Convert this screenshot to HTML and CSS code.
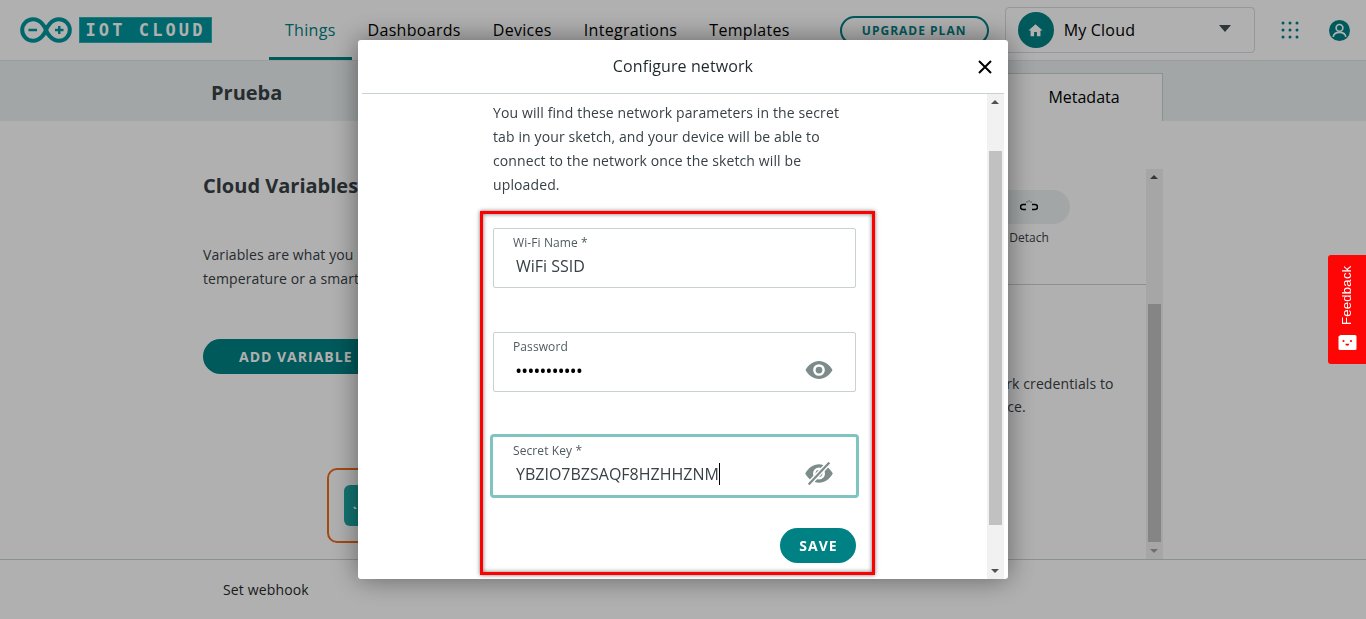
FILE: index.html
```html
<!DOCTYPE html>
<html lang="en">
<head>
<meta charset="utf-8">
<title>Configure network</title>
<link rel="stylesheet" href="styles.css">
</head>
<body>
<div class="page">
  <header class="topbar">
    <div class="brand">
      <svg class="brand-mark" viewBox="0 0 52 26" width="52" height="26" aria-hidden="true">
        <path d="M13 2.200C7 2.200 2.200 7 2.200 13S7 23.800 13 23.800c8 0 12-8 13-10.800 1-2.800 5-10.800 13-10.800 6 0 10.800 4.800 10.800 10.800S45 23.800 39 23.800c-8 0-12-8-13-10.800-1-2.800-5-10.800-13-10.800z" fill="none" stroke="#00979d" stroke-width="4"/>
        <path d="M8.500 13h8.500M35 13h8.500M39.250 9v8" fill="none" stroke="#00979d" stroke-width="2.400"/>
      </svg>
      <span class="brand-name">IOT CLOUD</span>
    </div>
    <nav class="tabs">
      <a class="tab tab-active">Things</a>
      <a class="tab">Dashboards</a>
      <a class="tab">Devices</a>
      <a class="tab">Integrations</a>
      <a class="tab">Templates</a>
    </nav>
    <button class="upgrade">UPGRADE PLAN</button>
    <div class="space">
      <span class="space-avatar">
        <svg viewBox="0 0 24 24" width="17" height="17" aria-hidden="true"><path fill="#fff" d="M10 20v-6h4v6h5v-8h3L12 3 2 12h3v8z"/></svg>
      </span>
      <span class="space-name">My Cloud</span>
      <span class="caret-down"></span>
    </div>
    <svg class="apps" viewBox="0 0 18 18" width="18" height="18" aria-hidden="true">
      <g fill="#008184">
        <circle cx="2" cy="2" r="1.500"/><circle cx="9" cy="2" r="1.500"/><circle cx="16" cy="2" r="1.500"/>
        <circle cx="2" cy="9" r="1.500"/><circle cx="9" cy="9" r="1.500"/><circle cx="16" cy="9" r="1.500"/>
        <circle cx="2" cy="16" r="1.500"/><circle cx="9" cy="16" r="1.500"/><circle cx="16" cy="16" r="1.500"/>
      </g>
    </svg>
    <svg class="account" viewBox="0 0 20 20" width="21" height="21" aria-hidden="true">
      <circle cx="10" cy="10" r="10" fill="#008184"/>
      <circle cx="10" cy="7.500" r="3.200" fill="none" stroke="#fff" stroke-width="1.600"/>
      <path d="M4 16c.5-3 3-4.200 6-4.200s5.500 1.200 6 4.200" fill="none" stroke="#fff" stroke-width="1.600"/>
    </svg>
  </header>

  <section class="subbar">
    <div class="container subbar-row">
      <h1 class="thing-name">Prueba</h1>
      <div class="subtab">Metadata</div>
    </div>
  </section>

  <main class="main">
    <div class="container columns">
      <div class="col-left">
        <h2 class="vars-title">Cloud Variables</h2>
        <p class="vars-text">Variables are what you need<br>temperature or a smart device</p>
        <button class="add-var">ADD VARIABLE</button>
        <div class="hint">
          <span class="hint-icon">
            <svg viewBox="0 0 24 24" width="24" height="24" aria-hidden="true"><path d="M8 22l5 6 9-14" fill="none" stroke="#fff" stroke-width="2"/></svg>
          </span>
        </div>
      </div>
      <div class="col-right">
        <div class="device-actions">
          <div class="action">
            <span class="action-pill">
              <svg viewBox="0 0 18 14" width="18" height="14" aria-hidden="true">
                <path d="M6 5H3a2 2 0 0 0 0 5h3M12 5h3a2 2 0 0 1 0 5h-3" fill="none" stroke="#000" stroke-width="1.500" transform="translate(0 -.5)"/>
                <path d="M7 1.500v1M9 0.500v1M11 1.500v1" stroke="#333" stroke-width="1"/>
              </svg>
            </span>
            <span class="action-label">Detach</span>
          </div>
        </div>
        <div class="network">
          <p class="network-text">Enter your network credentials to<br>connecting a device.</p>
        </div>
      </div>
      <div class="page-scroll">
        <span class="arrow-up arrow-dark"></span>
        <span class="page-thumb"></span>
        <span class="arrow-down arrow-mid"></span>
      </div>
    </div>
  </main>

  <footer class="footer">
    <div class="container"><a class="webhook">Set webhook</a></div>
  </footer>
</div>

<div class="overlay">
  <div class="modal">
    <div class="modal-head">
      <h3 class="modal-title">Configure network</h3>
      <svg class="modal-close" viewBox="0 0 14 14" width="14" height="14" aria-hidden="true"><path d="M1 1l12 12M13 1L1 13" stroke="#000" stroke-width="2"/></svg>
    </div>
    <div class="modal-body">
      <div class="modal-content">
        <p class="modal-text">You will find these network parameters in the secret tab in your sketch, and your device will be able to connect to the network once the sketch will be uploaded.</p>
        <div class="field">
          <span class="field-label">Wi-Fi Name *</span>
          <span class="field-value">WiFi SSID</span>
        </div>
        <div class="field field-gap">
          <span class="field-label">Password</span>
          <span class="field-value field-dots">•••••••••••</span>
          <svg class="field-eye" viewBox="0 0 24 16" width="28" height="18" aria-hidden="true"><path fill="#7e8b8b" d="M12 0C7 0 2.700 3.100 0 8c2.700 4.900 7 8 12 8s9.300-3.100 12-8c-2.700-4.900-7-8-12-8zm0 13.200A5.200 5.200 0 1 1 12 2.800a5.200 5.200 0 0 1 0 10.400zM12 5a3 3 0 1 0 0 6 3 3 0 0 0 0-6z"/></svg>
        </div>
        <div class="field field-focus">
          <span class="field-label">Secret Key *</span>
          <span class="field-value"><span class="typed">YBZIO7BZSAQF8HZHHZNM</span></span>
          <svg class="field-eye" viewBox="0 0 24 20" width="28" height="23" aria-hidden="true">
            <path fill="#7e8b8b" d="M12 2C7 2 2.700 5.100 0 10c2.700 4.900 7 8 12 8s9.300-3.100 12-8c-2.700-4.900-7-8-12-8zm0 13.200A5.200 5.200 0 1 1 12 4.800a5.200 5.200 0 0 1 0 10.400zM12 7a3 3 0 1 0 0 6 3 3 0 0 0 0-6z"/>
            <path d="M21 .5L3 19.500" stroke="#fff" stroke-width="4.500"/>
            <path d="M21 .5L3 19.500" stroke="#7e8b8b" stroke-width="2"/>
          </svg>
        </div>
        <div class="save-row"><button class="save">SAVE</button></div>
      </div>
      <div class="modal-scroll">
        <span class="arrow-up arrow-dark"></span>
        <span class="modal-thumb"></span>
        <span class="arrow-down arrow-dark"></span>
      </div>
    </div>
  </div>
  <div class="annotation"></div>
  <div class="feedback">
    <span class="feedback-text">Feedback</span>
    <svg class="feedback-face" viewBox="0 0 18 15" width="19" height="15" aria-hidden="true">
      <path fill="#fff" d="M0 1.500L2 0h14.500A1.500 1.500 0 0 1 18 1.500v12a1.500 1.500 0 0 1-1.500 1.500h-15A1.500 1.500 0 0 1 0 13.500z"/>
      <circle cx="5" cy="6" r="1.100" fill="#fe0606"/><circle cx="12.500" cy="6" r="1.100" fill="#fe0606"/>
      <path d="M6.800 8.800h4a2 2 0 0 1-4 0z" fill="#fe0606"/>
    </svg>
  </div>
</div>
</body>
</html>
```

FILE: styles.css
```css
* { box-sizing: border-box; }
html, body { margin: 0; height: 100%; overflow: hidden; }
body { font-family: "Open Sans", sans-serif; color: #1f2a2b; background: #fff; }
h1, h2, h3, p { margin: 0; }
button { font-family: inherit; cursor: pointer; }

.page { height: 100vh; display: flex; flex-direction: column; }
.container { width: 960px; margin: 0 auto; }

/* top bar */
.topbar { height: 61px; flex: none; display: flex; align-items: flex-start; padding-left: 20px; border-bottom: 1px solid #dfe5e5; }
.brand { display: flex; align-items: center; gap: 7px; height: 26px; margin-top: 17px; }
.brand-name { width: 133px; height: 26px; background: #00979d; color: #fff; font-family: "DejaVu Sans Mono", monospace; font-weight: 700; font-size: 17px; line-height: 25px; letter-spacing: 3.100px; text-align: center; border: 1px solid #2fb0b4; white-space: nowrap; }
.tabs { display: flex; gap: 0; margin-left: 57px; height: 60px; }
.tab { height: 60px; padding: 18px 16px 0; font-size: 16px; line-height: 24px; letter-spacing: .300px; color: #000; border-bottom: 3px solid transparent; }
.tab-active { color: #008184; border-bottom-color: #008184; }
.upgrade { margin-left: 34px; margin-top: 16px; width: 149px; height: 29px; border: 2px solid #008184; border-radius: 15px; background: transparent; color: #008184; font-size: 12px; font-weight: 700; letter-spacing: 1px; padding: 0; }
.space { margin-left: 16px; margin-top: 7px; width: 250px; height: 46px; border: 1px solid #d6dcdc; border-radius: 4px; display: flex; align-items: center; padding-left: 12px; }
.space-avatar { width: 36px; height: 36px; border-radius: 50%; background: #008184; display: flex; align-items: center; justify-content: center; }
.space-name { margin-left: 10px; font-size: 16px; letter-spacing: .200px; color: #000; flex: 1; }
.caret-down { width: 0; height: 0; margin-right: 23px; margin-top: -4px; border-left: 6px solid transparent; border-right: 6px solid transparent; border-top: 7px solid #434f50; }
.apps { margin-left: 26px; margin-top: 21px; }
.account { margin-left: 30px; margin-top: 20px; }

/* sub bar */
.subbar { height: 60px; flex: none; background: #ecf1f1; }
.subbar-row { height: 60px; display: flex; justify-content: space-between; align-items: flex-end; }
.thing-name { font-size: 20px; line-height: 27px; font-weight: 700; color: #374146; margin: 0 0 15px 8px; }
.subtab { width: 158px; height: 48px; border: 1px solid #c9d2d2; border-bottom: 0; background: #fff; font-size: 16px; line-height: 47px; text-align: center; color: #000; }

/* main */
.main { flex: 1; min-height: 0; }
.columns { height: 100%; display: flex; align-items: flex-start; padding-top: 48px; }
.col-left { width: 520px; flex: none; }
.vars-title { font-size: 20px; line-height: 24px; font-weight: 700; color: #374146; margin-top: 5px; }
.vars-text { margin-top: 45px; font-size: 14px; line-height: 24px; letter-spacing: .100px; color: #374146; white-space: nowrap; }
.add-var { display: block; margin-top: 48px; width: 240px; height: 35px; border: 0; border-radius: 18px; background: #008184; color: #fff; font-size: 14px; font-weight: 700; letter-spacing: 1px; text-align: left; padding: 0 0 0 36px; }
.hint { margin: 94px 0 0 124px; width: 300px; height: 75px; border: 2px solid #f06a1c; border-radius: 10px; padding: 15px; }
.hint-icon { display: block; width: 60px; height: 41px; border-radius: 6px; background: #1ba8a5; overflow: hidden; padding-left: 2px; }

.col-right { flex: 1; min-width: 0; height: 390px; }
.device-actions { height: 116px; border-bottom: 1px solid #c9d2d2; display: flex; justify-content: flex-end; padding: 21px 76px 0 0; }
.action { display: flex; flex-direction: column; align-items: center; width: 82px; }
.action-pill { width: 82px; height: 34px; border-radius: 17px; background: #ecf1f1; display: flex; align-items: center; justify-content: center; }
.action-label { margin-top: 5px; font-size: 12px; line-height: 18px; color: #374146; }
.network { padding: 87px 0 0 169px; }
.network-text { font-size: 14px; line-height: 23px; letter-spacing: .100px; color: #374146; white-space: nowrap; }

.page-scroll { width: 17px; height: 390px; flex: none; margin-top: 0; background: #f1f1f1; display: flex; flex-direction: column; align-items: center; position: relative; }
.page-thumb { position: absolute; left: 2px; top: 135px; width: 13px; height: 238px; background: #c1c1c1; }
.arrow-up, .arrow-down { position: absolute; left: 4px; width: 0; height: 0; border-left: 4px solid transparent; border-right: 4px solid transparent; }
.arrow-up { top: 6px; border-bottom: 4px solid #505050; }
.arrow-down { bottom: 6px; border-top: 4px solid #505050; }
.arrow-mid.arrow-down { border-top-color: #a0a0a0; }

/* footer */
.footer { height: 60px; flex: none; border-top: 1px solid #c9d2d2; }
.webhook { display: block; margin: 20px 0 0 20px; font-size: 14px; line-height: 20px; letter-spacing: .150px; color: #1f2a2b; }

/* overlay + modal */
.overlay { position: fixed; inset: 0; background: rgba(0, 0, 0, .31); }
.modal { position: absolute; left: 358px; top: 40px; width: 650px; height: 539px; background: #fff; border-radius: 3px; box-shadow: 0 0 28px rgba(0, 0, 0, .45); display: flex; flex-direction: column; padding: 0 4px; }
.modal-head { height: 54px; flex: none; display: flex; align-items: center; justify-content: center; border-bottom: 1px solid #c9d2d2; position: relative; }
.modal-title { font-size: 16px; font-weight: 400; line-height: 24px; letter-spacing: .100px; color: #1f2a2b; margin-top: -2px; }
.modal-close { position: absolute; right: 12px; top: 20px; }
.modal-body { flex: 1; min-height: 0; display: flex; }
.modal-content { flex: 1; min-width: 0; padding: 7px 0 0 131px; overflow: hidden; }
.modal-text { width: 363px; font-size: 14px; line-height: 24px; letter-spacing: .120px; color: #374146; }

.field { position: relative; display: block; width: 363px; height: 60px; margin-top: 31px; border: 1px solid #c9d2d2; border-radius: 2px; padding: 5px 0 0 19px; }
.field-gap { margin-top: 44px; }
.field-label { display: block; font-size: 12px; line-height: 17px; letter-spacing: .100px; color: #4e5b61; }
.field-value { display: block; margin: 3px 0 0 3px; font-size: 16px; line-height: 24px; color: #374146; }
.field-dots { color: #000; font-size: 14px; letter-spacing: .800px; margin-top: 4px; font-weight: 700; }
.field-eye { position: absolute; right: 22px; top: 28px; }
.field-focus { width: 369px; height: 64px; margin: 42px 0 0 -3px; border: 3px solid #7fc4c1; border-radius: 4px; padding: 5px 0 0 20px; }
.field-focus .field-eye { right: 23px; top: 25px; }
.typed { border-right: 1px solid #000; padding-right: 0; }
.save-row { width: 363px; margin-top: 30px; display: flex; justify-content: flex-end; }
.save { width: 76px; height: 35px; border: 0; border-radius: 18px; background: #008184; color: #fff; font-size: 14px; font-weight: 700; letter-spacing: 1px; padding: 0 0 0 1px; }

.modal-scroll { width: 17px; flex: none; background: #f1f1f1; position: relative; }
.modal-thumb { position: absolute; left: 2px; top: 57px; width: 13px; height: 374px; background: #c1c1c1; }

.annotation { position: absolute; left: 480px; top: 211px; width: 395px; height: 364px; border: 3px solid #f00; box-shadow: 0 0 4px rgba(0, 0, 0, .55), inset 0 0 4px rgba(0, 0, 0, .55); }

.feedback { position: absolute; right: 0; top: 255px; width: 38px; height: 109px; background: #fe0606; border-radius: 3px 0 0 3px; display: flex; flex-direction: column; align-items: center; padding-top: 12px; }
.feedback-text { writing-mode: vertical-rl; transform: rotate(180deg); font-family: "Liberation Sans", sans-serif; font-size: 13px; line-height: 14px; letter-spacing: .300px; color: #fff; height: 58px; text-align: left; white-space: nowrap; }
.feedback-face { margin-top: 10px; }
```
